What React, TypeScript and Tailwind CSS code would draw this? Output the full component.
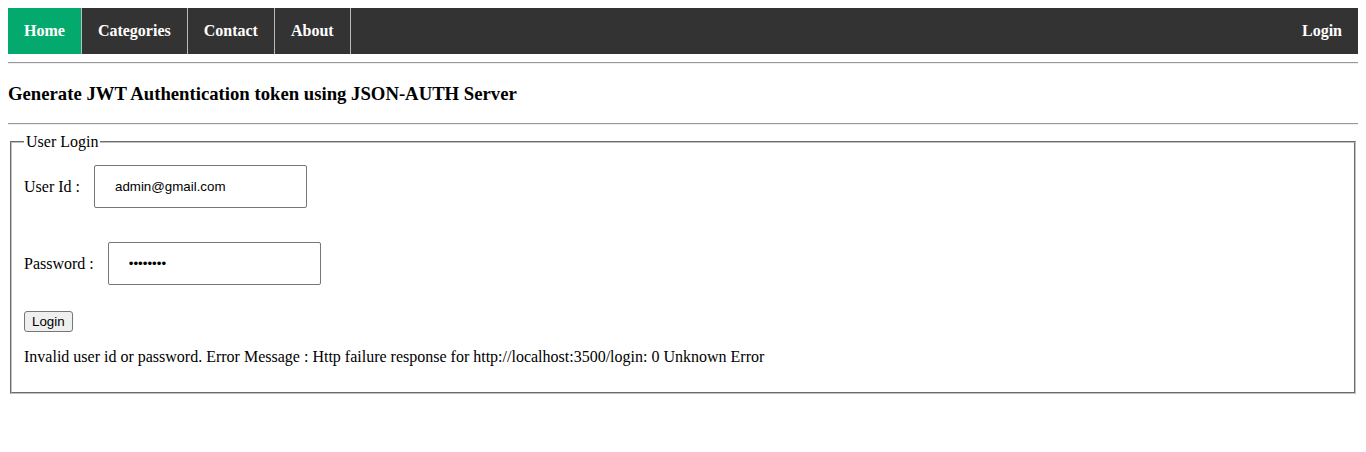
const navItems = ["Home", "Categories", "Contact", "About"];

const Rule = () => (
  <div className="my-2 h-[2px] border-t border-b border-t-[#9a9a9a] border-b-[#eeeeee]" />
);

const App = () => {
  return (
    <div className="min-h-screen bg-white p-2 font-['Liberation_Serif',serif] text-base leading-[normal] text-black">
      <ul className="flex bg-[#333333]">
        {navItems.map((item, i) => (
          <li
            key={item}
            className={[
              "border-r border-[#bbbbbb] px-4 py-[14px] font-bold text-white",
              i === 0 ? "bg-[#04aa6d]" : "",
            ].join(" ")}
          >
            {item}
          </li>
        ))}
        <li className="ml-auto px-4 py-[14px] font-bold text-white">Login</li>
      </ul>

      <Rule />

      <h3 className="my-[18.72px] text-[18.72px] font-bold">
        Generate JWT Authentication token using JSON-AUTH Server
      </h3>

      <Rule />

      <fieldset className="mx-[2px] border-2 border-[#c0c0c0] px-3 pt-[5.6px] pb-[10px] [border-style:groove]">
        <legend className="px-[2px]">User Login</legend>

        <div className="flex items-center">
          <label>User Id :</label>
          <input
            type="text"
            readOnly
            value="admin@gmail.com"
            className="my-2 ml-[14px] h-[43px] w-[213px] rounded-[2px] border border-[#767676] px-5 font-['Liberation_Sans',Arial,sans-serif] text-[13.33px] text-black outline-none"
          />
        </div>

        <div className="mt-[18px] flex items-center">
          <label>Password :</label>
          <input
            type="password"
            readOnly
            value="secret12"
            className="my-2 ml-[14px] h-[43px] w-[213px] rounded-[2px] border border-[#767676] px-5 font-['Liberation_Sans',Arial,sans-serif] text-[13.33px] text-black outline-none"
          />
        </div>

        <button className="mt-[18px] h-[21px] rounded-[3px] border border-[#767676] bg-[#efefef] px-[7px] font-['Liberation_Sans',Arial,sans-serif] text-[13.33px] leading-none text-black">
          Login
        </button>

        <p className="my-4">
          Invalid user id or password. Error Message : Http failure response
          for http://localhost:3500/login: 0 Unknown Error
        </p>
      </fieldset>
    </div>
  );
};

export default App;
